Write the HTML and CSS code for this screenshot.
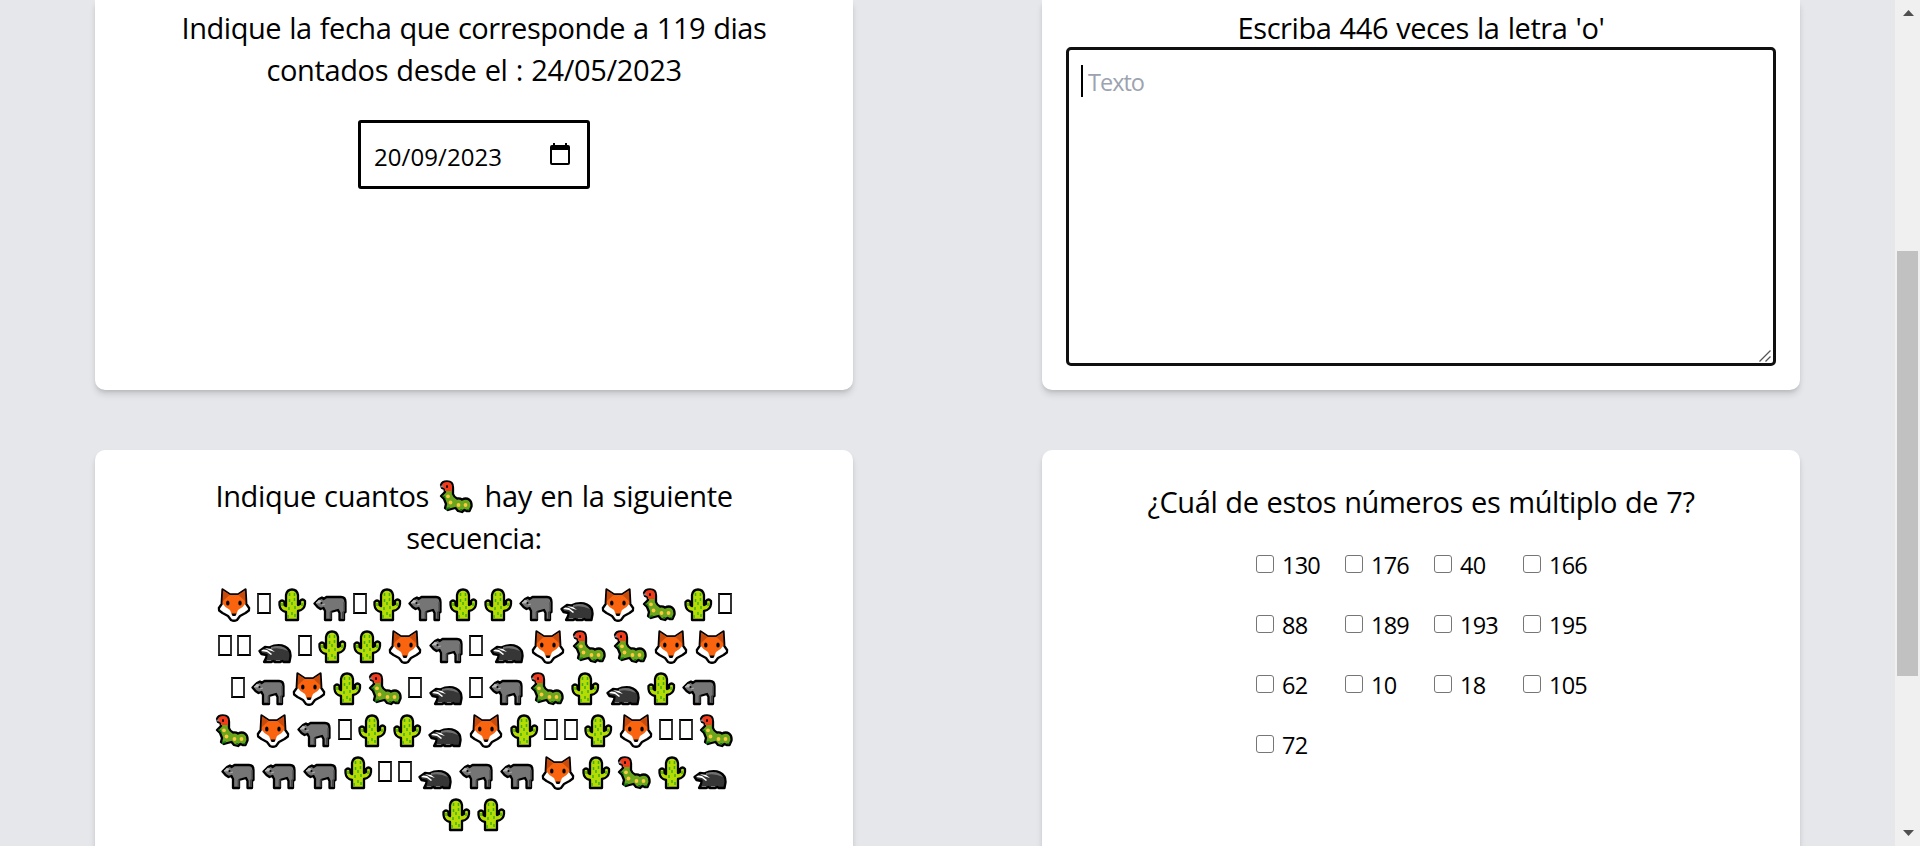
FILE: index.html
```html
<!DOCTYPE html>
<html lang="es">
<head>
<meta charset="utf-8">
<title>Captcha</title>
<link rel="stylesheet" href="styles.css">
</head>
<body>
<svg class="defs" aria-hidden="true">
  <symbol id="fox" viewBox="0 0 34 34">
    <path d="M5.500 1.500 13 6.500h8L28.500 1.500 29.300 16l2.800 4-.2 2.500-3.400 2.500-5.500 3-3 4q-3 1.500-6 0l-3-4-5.500-3-3.400-2.500-.2-2.500L4.700 16z" fill="#fff" stroke="#000" stroke-width="2.300" stroke-linejoin="round"/>
    <path d="M6 2.500 13 7h8l7-4.500.5 13-3 3.500-4.500 3-2 5h-4l-2-5-4.500-3-3-3.500z" fill="#fa640f"/>
    <path d="M6 2.500 12.500 7 6 13zM28 2.500 21.500 7 28 13z" fill="#c64b0c"/>
    <ellipse cx="10.800" cy="15" rx="1.700" ry="2.500"/><ellipse cx="23" cy="15" rx="1.700" ry="2.500"/>
    <path d="M14.500 25.500h5l-1 2.500h-3z"/>
  </symbol>
  <symbol id="cactus" viewBox="0 0 34 34">
    <path d="M11 32V24q-6-1-6.500-7v-3q2.500-3 5 0v3l1.500 1V7q1-5.500 6-5.500T23 7v10l2-1v-3q2.500-3 5 0v3q-.5 6-7 7v9z" fill="#b5dc05" stroke="#000" stroke-width="2.300" stroke-linejoin="round"/>
    <path d="M14.500 5v3m5-3v3M14.500 11v3m5-4v3M17 14v3m-3 2v3m6-4v3M17 24v3m-4 0v3m7-4v3M7 15v3m20-3v3" stroke="#3fae16" stroke-width="1.500"/>
  </symbol>
  <symbol id="bison" viewBox="0 0 34 34">
    <path d="M1.500 15.500 6 11l3-1.500 1.500 1.500 3-2H28q4.500 0 4.500 5v10l-1.500 1v7h-4.500v-7l-1.500-3-7 2v8H12V23l-1.500-3-3 1-3-2z" fill="#757575" stroke="#000" stroke-width="2.300" stroke-linejoin="round"/>
    <path d="M30.500 14v9l-1.500 1v7h2v-7l1-1V14zM17 23v8h1.500v-8z" fill="#444"/>
    <path d="m3 15 3-3 2 1-1 2zM9 17l3-1" fill="#bbb" stroke="#bbb" stroke-width=".7"/>
    <circle cx="8.500" cy="15" r="1"/>
  </symbol>
  <symbol id="badger" viewBox="0 0 34 34">
    <path d="M1.500 21 7 17l4 .5q9-4 16-1 6 3 5.500 10l-1 5.500h-6l-1-1-2 1h-6l-1-1-2 1H6l2-4 .5-3-5-1z" fill="#363636" stroke="#000" stroke-width="2.300" stroke-linejoin="round"/>
    <path d="M13 17q12-3 17 4-9-4-17-2z" fill="#707070"/>
    <path d="m3 21 2-1.500 4 .5 5 4-1 1-4-3zM7 18l6 1 4 3-5-1.500z" fill="#fff"/>
    <path d="M9 30.500h4m5 0h4" stroke="#777" stroke-width="1"/>
  </symbol>
  <symbol id="bug" viewBox="0 0 34 34">
    <path d="M2 5q1-3.500 6-3.500 6 0 6 6V14q1 3 4 4.500 3-.5 5 1 4-2 7 0t2.500 7l-2 4.500h-3l-2-1-2.500 2-4-1-2.500-3-4 1-3.500 1-3-2 1-4-2-5-3-3 4-4-.5-3L3 8z" fill="#6aa51e" stroke="#000" stroke-width="2.300" stroke-linejoin="round"/>
    <path d="M3 5q1-3 5-3 5 0 5 5v4H6V9L3 7z" fill="#f33b1c"/>
    <path d="M1.500 5.500h3v1.800h-3z" fill="#888"/>
    <ellipse cx="8" cy="6.500" rx="1" ry="1.600"/>
    <path d="m7 28 4-1-1 2-3 1zm14 1h3l-2 2zm7 0h3l-2 2zM3 15l3 1 1 4z" fill="#087a15"/>
    <g fill="#ffc83d"><circle cx="9" cy="16.300" r="1.900"/><circle cx="11.500" cy="22.500" r="1.900"/><circle cx="19.500" cy="25" r="1.900"/><circle cx="26.500" cy="25" r="1.900"/></g>
  </symbol>
</svg>

<div class="page">
  <main class="cards">
    <section class="card upper">
      <h2 class="title"><span class="t-date1">Indique la fecha que corresponde a 119 dias</span><span class="t-date2">contados desde el : 24/05/2023</span></h2>
      <div class="date">
        <span>20/09/2023</span>
        <svg class="calendar" viewBox="0 0 20 22"><path d="M3 0h2v2h10V0h2v2h1q2 0 2 2v16q0 2-2 2H2q-2 0-2-2V4q0-2 2-2h1zM2 7v13h16V7z"/></svg>
      </div>
    </section>
    <section class="card upper">
      <h2 class="title"><span class="t-letter">Escriba 446 veces la letra 'o'</span></h2>
      <div class="textarea">
        <i class="caret"></i><span class="placeholder">Texto</span>
        <svg class="grip" viewBox="0 0 12 12"><path d="M.5 11.500 11.500.5M6.500 11.500l5-5" stroke="#555" stroke-width="1.300"/></svg>
      </div>
    </section>
    <section class="card lower">
      <h2 class="title"><span class="t-count">Indique cuantos <svg class="inline-bug"><use href="#bug"/></svg> hay en la siguiente</span><span class="t-seq">secuencia:</span></h2>
      <div class="sequence" id="sequence"></div>
    </section>
    <section class="card lower numbers">
      <h2 class="title"><span class="t-multiple">¿Cuál de estos números es múltiplo de 7?</span></h2>
      <div class="options">
        <label><i class="box"></i>130</label><label><i class="box"></i>176</label><label><i class="box"></i>40</label><label><i class="box"></i>166</label>
        <label><i class="box"></i>88</label><label><i class="box"></i>189</label><label><i class="box"></i>193</label><label><i class="box"></i>195</label>
        <label><i class="box"></i>62</label><label><i class="box"></i>10</label><label><i class="box"></i>18</label><label><i class="box"></i>105</label>
        <label><i class="box"></i>72</label>
      </div>
    </section>
  </main>
  <aside class="scrollbar">
    <svg class="arrow" viewBox="0 0 11 6"><path d="M0 6 5.500 0 11 6z"/></svg>
    <div class="thumb"></div>
    <svg class="arrow" viewBox="0 0 11 6"><path d="M0 0 5.500 6 11 0z"/></svg>
  </aside>
</div>
<script src="script.js"></script>
</body>
</html>
```

FILE: styles.css
```css
* { box-sizing: border-box; }
body { margin: 0; background: #e5e7eb; color: #000; font-family: "Open Sans", sans-serif; overflow: hidden; }
.defs { display: none; }
.page { display: flex; height: 846px; overflow: hidden; }
.cards {
  flex: 1;
  display: grid;
  grid-template-columns: 758px 758px;
  grid-template-rows: 390px 450px;
  column-gap: 189px;
  row-gap: 60px;
  padding-left: 95px;
}
.card {
  display: flex;
  flex-direction: column;
  align-items: center;
  background: #fff;
  border-radius: 10px;
  box-shadow: 0 5px 7.5px -1.25px rgb(0 0 0 / .14), 0 2.5px 5px -2.5px rgb(0 0 0 / .14);
}
.upper { border-top-left-radius: 0; border-top-right-radius: 0; padding-top: 7px; }
.lower { padding-top: 25px; }
.numbers { padding-top: 31px; }
.title { display: flex; flex-direction: column; align-items: center; margin: 0; font-size: 29px; font-weight: 400; line-height: 42px; white-space: nowrap; }
.title span { display: block; height: 42px; word-spacing: 1px; }
.t-date1 { letter-spacing: -.46px; }
.t-date2 { letter-spacing: -.35px; }
.t-letter { letter-spacing: -.42px; }
.t-count { letter-spacing: -.32px; }
.t-seq { letter-spacing: -.55px; }
.t-multiple { letter-spacing: -.44px; }
.date {
  display: flex;
  align-items: center;
  justify-content: space-between;
  width: 232px;
  height: 69px;
  margin-top: 29px;
  padding: 3px 17px 0 13px;
  border: 3px solid #000;
  border-radius: 3px;
  font-size: 24px;
  letter-spacing: .07px;
}
.calendar { width: 20px; height: 22px; margin-bottom: 4px; }
.textarea {
  display: flex;
  position: relative;
  width: 710px;
  height: 319px;
  margin-top: -2px;
  padding: 15px 12px;
  border: 3px solid #101010;
  border-radius: 5px;
  font-size: 24px;
  line-height: 35px;
}
.caret { width: 2px; height: 32px; background: #000; }
.placeholder { margin-left: 5px; color: #9ca3af; font-size: 23.500px; letter-spacing: -1px; }
.grip { position: absolute; right: 2px; bottom: 1px; width: 12px; height: 12px; }
.inline-bug { width: 34px; height: 34px; margin: 0 3px 0 2px; vertical-align: -7px; }
.sequence { margin-top: 25px; }
.row { display: flex; justify-content: center; height: 42px; }
.glyph { display: flex; justify-content: center; width: 41.100px; padding-top: 4px; }
.glyph svg { width: 34px; height: 34px; }
.glyph.cactus { width: 35px; }
.glyph.missing { width: 19.400px; padding-top: 9px; }
.missing i { width: 14px; height: 21px; border: 2px solid #000; border-left-color: #333; border-right-color: #333; }
.options { display: grid; grid-template-columns: repeat(4, 89px); grid-auto-rows: 60px; width: 356px; margin: 12px 0 0 26px; }
.options label { display: flex; align-items: center; gap: 8px; font-size: 23.500px; line-height: 36px; letter-spacing: -.75px; }
.box { width: 18px; height: 18px; margin-bottom: 2px; border: 1px solid #767676; border-radius: 3px; }
.scrollbar { display: flex; flex-direction: column; align-items: center; justify-content: space-between; width: 25px; padding: 10px 0; background: #f0f0f0; }
.arrow { width: 11px; height: 6px; fill: #505050; margin-left: 1px; }
.thumb { width: 21px; height: 425px; margin-bottom: -81px; background: #c1c1c1; }
```

FILE: script.js
```js
// f fox, c cactus, b bison, g badger, w caterpillar, x glyph missing from the font
const rows = [
  "fxcbxcbccbgfwcx",
  "xxgxccfbxgfwwff",
  "xbfcwxgxbwcgcb",
  "wfbxccgfcxxcfxxw",
  "bbbcxxgbbfcwcg",
  "cc"
];
const names = { f: "fox", c: "cactus", b: "bison", g: "badger", w: "bug" };
document.getElementById("sequence").innerHTML = rows.map(row =>
  '<div class="row">' + [...row].map(k => k === "x"
    ? '<span class="glyph missing"><i></i></span>'
    : `<span class="glyph ${names[k]}"><svg><use href="#${names[k]}"/></svg></span>`
  ).join("") + "</div>"
).join("");
```
